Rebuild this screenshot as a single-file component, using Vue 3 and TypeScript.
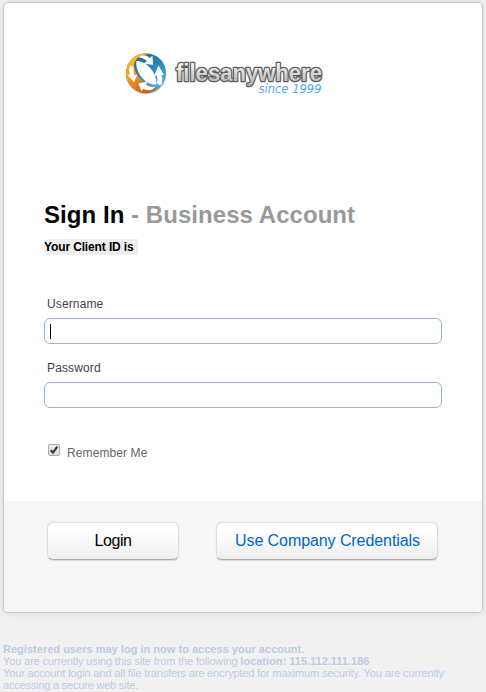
<script setup lang="ts">
import { ref } from 'vue'

const username = ref<string>('')
const password = ref<string>('')
const remember = ref<boolean>(true)
</script>

<template>
  <main class="page">
    <form class="card" @submit.prevent>
      <div class="main">
        <svg class="logo" width="210" height="56" viewBox="120 48 210 56" role="img" aria-label="filesanywhere">
          <defs>
            <linearGradient id="blue" x1="0" y1="0" x2="0.6" y2="1">
              <stop offset="0" stop-color="#1d5c7c" />
              <stop offset="0.55" stop-color="#2b86b8" />
              <stop offset="1" stop-color="#4fb4e6" />
            </linearGradient>
            <linearGradient id="orange" x1="0.2" y1="0" x2="0.6" y2="1">
              <stop offset="0" stop-color="#ffc31f" />
              <stop offset="0.5" stop-color="#f99a1e" />
              <stop offset="1" stop-color="#c9601c" />
            </linearGradient>
            <linearGradient id="silver" x1="0" y1="0" x2="0" y2="1">
              <stop offset="0.2" stop-color="#f0f0f0" />
              <stop offset="1" stop-color="#b0b0b0" />
            </linearGradient>
          </defs>
          <circle cx="146" cy="74" r="20.3" fill="#777" opacity="0.3" />
          <circle cx="146" cy="73.2" r="20" fill="url(#blue)" />
          <path d="M146 53.2A20 20 0 0 0 146 93.2Q154 93 158 87C148 88 136 78 134 67C134 59 139 55 150 54Z" fill="url(#orange)" />
          <path d="M158 87C163 80 160 71 154 64C163 71 166 81 161 86.5Q156 92 149 93Q155 91 158 87Z" fill="#45a9dc" />
          <path d="M136.5 61C145 60 157 72 156.5 84.5C147 86 134.5 73 136.5 61Z" fill="#fff" />
          <path d="M138.5 57.5C142 54 147 55 149.5 58L152.5 55.5L153 65L143.5 63.5L147 61.3Q143.5 57.5 138.5 57.5Z" fill="#fff" />
          <path d="M130 65L134 67Q132.5 71.5 134.5 75.5L137.5 74.5L134 82L127 74.5L129.8 75Q128.3 69.5 130 65Z" fill="#fff" />
          <path d="M138.5 83.5L147.5 81.5L146 84.8Q151 88.3 156 86.5Q151 92.5 143 88.8L141.5 91.5Z" fill="#fff" />
          <path d="M158.5 65.5L164 75L161.3 75Q163.5 80.5 161 85.5Q158.7 85.5 157 83Q158.2 79 156.8 75.5L154 76Z" fill="#fff" />
          <text class="brand" x="176" y="81" textLength="146" lengthAdjust="spacingAndGlyphs">filesanywhere</text>
          <text class="since" x="258.5" y="93" textLength="63" lengthAdjust="spacingAndGlyphs">since 1999</text>
        </svg>
        <h1>Sign In <span>- Business Account</span></h1>
        <p class="client">Your Client ID is <span>:</span></p>
        <label class="caption" for="username">Username</label>
        <div class="field">
          <i class="caret"></i>
          <input id="username" v-model="username" type="text" />
        </div>
        <label class="caption second" for="password">Password</label>
        <div class="field">
          <input id="password" v-model="password" type="password" />
        </div>
        <label class="remember">
          <input v-model="remember" class="native" type="checkbox" />
          <span class="box">
            <svg v-if="remember" width="10" height="10" viewBox="0 0 10 10">
              <path d="M1.6 5.2L4 7.6L8.3 1.6" fill="none" stroke="#3c3c3c" stroke-width="2.3" />
            </svg>
          </span>
          <span class="remember-text">Remember Me</span>
        </label>
      </div>
      <div class="actions">
        <button class="login" type="submit">Login</button>
        <button class="company" type="button">Use Company Credentials</button>
      </div>
    </form>
    <footer>
      <div class="headline"><b>Registered users may log in now to access your account.</b></div>
      <div class="note">You are currently using this site from the following <b>location: 115.112.111.186</b></div>
      <div class="note">Your account login and all file transfers are encrypted for maximum security. You are currently</div>
      <div class="note last">accessing a secure web site.</div>
    </footer>
  </main>
</template>

<style>
body {
  background: #f1f1f1;
}
</style>

<style scoped>
.page {
  box-sizing: border-box;
  width: 486px;
  height: 692px;
  padding: 2px 3px 0;
  overflow: hidden;
  font-family: "Liberation Sans", Arial, sans-serif;
}
.card {
  box-sizing: border-box;
  width: 480px;
  height: 611px;
  border: 1px solid #c6c6c6;
  border-radius: 5px;
  background: #fff;
  box-shadow: 0 0 8px rgba(0, 0, 0, 0.1);
  overflow: hidden;
}
.main {
  box-sizing: border-box;
  height: 498px;
  padding: 45px 40px 0;
}
.logo {
  display: block;
  margin-left: 76px;
}
.brand {
  font: bold 23px "Liberation Sans", Arial, sans-serif;
  fill: url(#silver);
  stroke: #5c5c5c;
  stroke-width: 2.6px;
  stroke-linejoin: round;
  paint-order: stroke;
}
.since {
  font: italic 11.5px "DejaVu Sans", sans-serif;
  fill: #55a5f5;
}
h1 {
  margin: 97px 0 0;
  font-size: 24px;
  line-height: 28px;
  letter-spacing: 0.05px;
  white-space: nowrap;
  color: #000;
}
h1 span {
  color: #999;
}
.client {
  width: 94px;
  height: 16px;
  margin: 10px 0 0;
  border-radius: 5px 0 0 5px;
  background: #eee;
  font-size: 12px;
  font-weight: bold;
  line-height: 16px;
  letter-spacing: -0.13px;
  white-space: nowrap;
  overflow: hidden;
}
.client span {
  color: #ccc;
}
.caption {
  display: block;
  margin: 41px 0 0 3px;
  font-size: 12px;
  line-height: 16px;
  letter-spacing: 0.13px;
  color: #444;
}
.caption.second {
  margin-top: 16px;
}
.field {
  box-sizing: border-box;
  display: flex;
  align-items: center;
  width: 398px;
  height: 26px;
  margin-top: 6px;
  padding-left: 6px;
  border: 1px solid #98b2dc;
  border-radius: 6px;
  background: #fff;
}
.field input {
  flex: 1;
  min-width: 0;
  padding: 0;
  border: 0;
  outline: 0;
  background: transparent;
}
.caret {
  width: 1px;
  height: 15px;
  margin-left: -1px;
  background: #000;
}
.remember {
  display: flex;
  margin: 36px 0 0 4px;
  font-size: 12px;
  line-height: 16px;
  letter-spacing: 0.1px;
  color: #666;
}
.native {
  display: none;
}
.box {
  box-sizing: border-box;
  display: flex;
  width: 12px;
  height: 12px;
  border: 1px solid #aaa;
  border-radius: 2px;
  background: linear-gradient(#eee, #ddd);
}
.remember-text {
  margin: 1px 0 0 7px;
}
.actions {
  box-sizing: border-box;
  display: flex;
  gap: 37px;
  height: 111px;
  padding: 21px 43px;
  background: #f6f6f6;
}
button {
  box-sizing: border-box;
  height: 38px;
  padding: 0;
  border: 1px solid #ddd;
  border-bottom-color: #aaa;
  border-radius: 6px;
  background: linear-gradient(#fff 20%, #eee);
  box-shadow: 0 0 1px rgba(0, 0, 0, 0.15), 0 1px 1px rgba(0, 0, 0, 0.1);
  font: 16px/34px "Liberation Sans", Arial, sans-serif;
}
.login {
  width: 132px;
  letter-spacing: -0.4px;
  color: #000;
}
.company {
  width: 222px;
  padding-left: 1px;
  letter-spacing: -0.08px;
  color: #06c;
}
footer {
  margin-top: 30px;
  font-size: 11px;
  line-height: 12px;
  white-space: nowrap;
  color: #bccbe3;
}
.headline {
  letter-spacing: 0.02px;
}
.note {
  letter-spacing: -0.14px;
}
.note b {
  letter-spacing: 0;
}
.last {
  letter-spacing: -0.2px;
}
</style>
